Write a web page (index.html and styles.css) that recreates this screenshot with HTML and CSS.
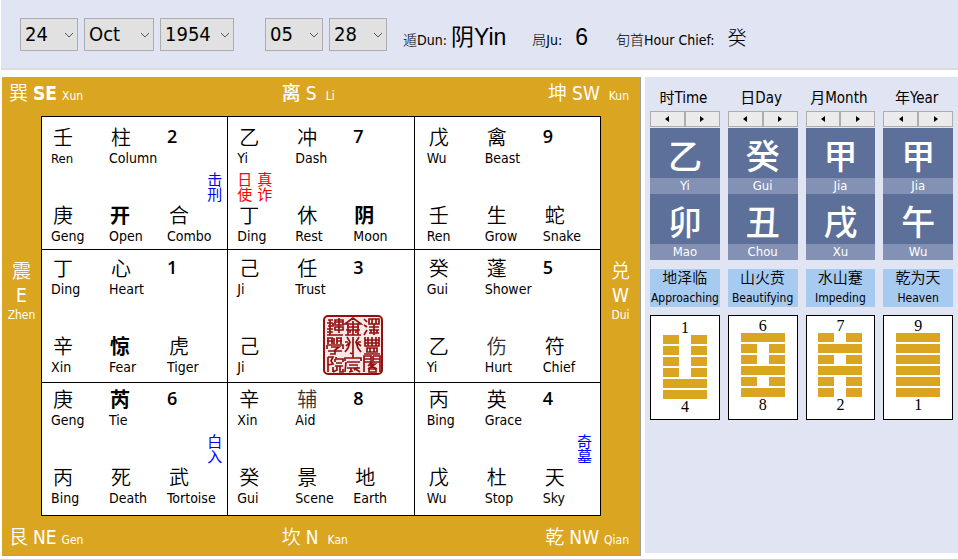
FILE: index.html
```html
<!DOCTYPE html>
<html lang="en">
<head>
<meta charset="utf-8">
<title>Qi Men Chart</title>
<link rel="stylesheet" href="styles.css">
</head>
<body>
<header class="toolbar">
  <div class="fields">
    <span class="field w-day"><select aria-label="Day"><option>24</option></select><svg viewBox="0 0 10 6"><path d="M1 1l4 4 4-4"/></svg></span>
    <span class="field w-month"><select aria-label="Month"><option>Oct</option></select><svg viewBox="0 0 10 6"><path d="M1 1l4 4 4-4"/></svg></span>
    <span class="field w-year"><select aria-label="Year"><option>1954</option></select><svg viewBox="0 0 10 6"><path d="M1 1l4 4 4-4"/></svg></span>
  </div>
  <div class="fields time">
    <span class="field w-day"><select aria-label="Hour"><option>05</option></select><svg viewBox="0 0 10 6"><path d="M1 1l4 4 4-4"/></svg></span>
    <span class="field w-day"><select aria-label="Minute"><option>28</option></select><svg viewBox="0 0 10 6"><path d="M1 1l4 4 4-4"/></svg></span>
  </div>
  <dl class="facts">
    <div><dt>遁Dun:</dt><dd class="big">阴Yin</dd></div>
    <div class="ju"><dt>局Ju:</dt><dd class="big">6</dd></div>
    <div class="chief"><dt>旬首Hour Chief:</dt><dd class="stem">癸</dd></div>
  </dl>
</header>

<main class="workspace">
  <section class="board">
    <div class="edge top">
      <div><span class="zh">巽</span><b class="strong">SE</b><small>Xun</small></div>
      <div><span class="zh heavy">离</span><b>S</b><small class="far">Li</small></div>
      <div><span class="zh">坤</span><b>SW</b><small class="far">Kun</small></div>
    </div>
    <div class="side"><span class="zh">震</span><b>E</b><small>Zhen</small></div>
    <div class="palaces">
      <article class="palace">
        <div class="line"><p><i>壬</i><span class="minor">Ren</span></p><p><i>柱</i>Column</p><strong>2</strong></div>
        <div class="tags end"><span class="blue">击刑</span></div>
        <div class="line"><p><i>庚</i>Geng</p><p><i class="key">开</i>Open</p><p><i>合</i>Combo</p></div>
      </article>
      <article class="palace">
        <div class="line"><p><i>乙</i>Yi</p><p><i>冲</i>Dash</p><strong>7</strong></div>
        <div class="tags"><span>日使</span><span>真诈</span></div>
        <div class="line"><p><i>丁</i>Ding</p><p><i>休</i>Rest</p><p><i class="key">阴</i>Moon</p></div>
      </article>
      <article class="palace">
        <div class="line"><p><i>戊</i>Wu</p><p><i>禽</i>Beast</p><strong>9</strong></div>
        <div class="tags"></div>
        <div class="line"><p><i>壬</i>Ren</p><p><i>生</i>Grow</p><p><i>蛇</i>Snake</p></div>
      </article>
      <article class="palace mid">
        <div class="line"><p><i>丁</i>Ding</p><p><i>心</i>Heart</p><strong>1</strong></div>
        <div class="tags"></div>
        <div class="line"><p><i>辛</i>Xin</p><p><i class="key">惊</i>Fear</p><p><i>虎</i>Tiger</p></div>
      </article>
      <article class="palace mid">
        <div class="line"><p><i>己</i>Ji</p><p><i>任</i>Trust</p><strong>3</strong></div>
        <div class="tags"></div>
        <div class="line"><p><i>己</i>Ji</p></div>
        <svg class="seal" viewBox="0 0 60 60" role="img" aria-label="Seal">
          <rect x="1" y="1" width="58" height="58" rx="4"/>
          <g class="cut">
            <path d="M5 5H10M4 8H10M5 11H10V8M7 5V20M4 14H10M4 17H10M4 20H20M12 5H20V10H12ZM12 7H20M16 3V18M12 12H20V15H12Z"/>
            <path d="M30 3L22 9H38ZM24 12H36M23 15H37M25 9V20M35 9V20M30 6V20M22 20H38M27 15V18M33 15V18"/>
            <path d="M41 4L44 7M41 10L44 12M41 20L44 15M46 4H56V9H46ZM49 4V9M53 4V9M46 12H56M51 9V20M46 15H56M46 18H56M48 15V18M54 15V18"/>
            <path d="M5 23V29M9 23V29M4 23H10M4 26H10M14 23V29M18 23V29M13 23H19M13 26H19M11 23V29M4 30H20V34M4 30V34M8 32H16L12 35V39H7M5 36H19"/>
            <path d="M30 22V39L27 38M24 22L27 27L23 31M27 27L25 33L22 37M36 22L33 27L38 31M33 27L35 33L38 37M22 27H25M35 27H38"/>
            <path d="M42 22V31H56V22M45 22V31M49 22V31M53 22V31M42 25H56M42 28H56M44 33H54V37H44ZM41 39H57M47 33V37M51 33V37"/>
            <path d="M5 42V57M5 42H10L8 46L10 49L5 50M13 42V44H20V47M12 44V47M13 48H19M12 51H20M14 51V55L10 57M17 51V57H20V54M10 52V57"/>
            <path d="M30 40V43M22 46V43H38V46M23 47L22 57M24 47H37M26 50H35M24 53H37M28 53V57M26 57L30 56M31 53L37 57M35 52L31 55"/>
            <path d="M41 57V41H48V47H41M41 44H48M50 41H57V57M50 41V47H57M50 44H57M49 47L45 51M46 49H52L45 54M47 50L54 54M46 54H53V57H46Z"/>
          </g>
        </svg>
      </article>
      <article class="palace mid">
        <div class="line"><p><i>癸</i>Gui</p><p><i>蓬</i>Shower</p><strong>5</strong></div>
        <div class="tags"></div>
        <div class="line"><p><i>乙</i>Yi</p><p><i class="soft">伤</i>Hurt</p><p><i>符</i>Chief</p></div>
      </article>
      <article class="palace low">
        <div class="line"><p><i>庚</i>Geng</p><p><i class="key">芮</i>Tie</p><strong>6</strong></div>
        <div class="tags end"><span class="blue">白入</span></div>
        <div class="line"><p><i>丙</i>Bing</p><p><i>死</i>Death</p><p><i>武</i>Tortoise</p></div>
      </article>
      <article class="palace low">
        <div class="line"><p><i>辛</i>Xin</p><p><i class="soft">辅</i>Aid</p><strong>8</strong></div>
        <div class="tags"></div>
        <div class="line"><p><i>癸</i>Gui</p><p><i>景</i>Scene</p><p><i>地</i>Earth</p></div>
      </article>
      <article class="palace low">
        <div class="line"><p><i>丙</i>Bing</p><p><i>英</i>Grace</p><strong>4</strong></div>
        <div class="tags end wide"><span class="blue">奇墓</span></div>
        <div class="line"><p><i>戊</i>Wu</p><p><i>杜</i>Stop</p><p><i>天</i>Sky</p></div>
      </article>
    </div>
    <div class="side"><span class="zh">兑</span><b>W</b><small>Dui</small></div>
    <div class="edge bottom">
      <div><span class="zh">艮</span><b>NE</b><small>Gen</small></div>
      <div><span class="zh">坎</span><b>N</b><small class="far">Kan</small></div>
      <div><span class="zh">乾</span><b>NW</b><small>Qian</small></div>
    </div>
  </section>

  <aside class="pillars">
    <section class="pillar">
      <h2>时Time</h2>
      <div class="stepper"><button aria-label="Previous hour"><svg viewBox="0 0 4 6"><path d="M4 0v6L0 3z"/></svg></button><button aria-label="Next hour"><svg viewBox="0 0 4 6"><path d="M0 0v6l4-3z"/></svg></button></div>
      <div class="sign">乙</div><div class="reading">Yi</div>
      <div class="sign">卯</div><div class="reading">Mao</div>
      <div class="gua"><span>地泽临</span><span class="en">Approaching</span></div>
      <div class="hex lower"><span>1</span><div class="bars"><u class="gap"></u><u class="gap"></u><u class="gap"></u><u class="gap"></u><u></u><u></u></div><span>4</span></div>
    </section>
    <section class="pillar">
      <h2>日Day</h2>
      <div class="stepper"><button aria-label="Previous day"><svg viewBox="0 0 4 6"><path d="M4 0v6L0 3z"/></svg></button><button aria-label="Next day"><svg viewBox="0 0 4 6"><path d="M0 0v6l4-3z"/></svg></button></div>
      <div class="sign">癸</div><div class="reading">Gui</div>
      <div class="sign">丑</div><div class="reading">Chou</div>
      <div class="gua"><span>山火贲</span><span class="en">Beautifying</span></div>
      <div class="hex"><span>6</span><div class="bars"><u></u><u class="gap"></u><u class="gap"></u><u></u><u class="gap"></u><u></u></div><span>8</span></div>
    </section>
    <section class="pillar">
      <h2>月Month</h2>
      <div class="stepper"><button aria-label="Previous month"><svg viewBox="0 0 4 6"><path d="M4 0v6L0 3z"/></svg></button><button aria-label="Next month"><svg viewBox="0 0 4 6"><path d="M0 0v6l4-3z"/></svg></button></div>
      <div class="sign">甲</div><div class="reading">Jia</div>
      <div class="sign">戌</div><div class="reading">Xu</div>
      <div class="gua"><span>水山蹇</span><span class="en">Impeding</span></div>
      <div class="hex"><span>7</span><div class="bars"><u class="gap"></u><u></u><u class="gap"></u><u></u><u class="gap"></u><u class="gap"></u></div><span>2</span></div>
    </section>
    <section class="pillar">
      <h2>年Year</h2>
      <div class="stepper"><button aria-label="Previous year"><svg viewBox="0 0 4 6"><path d="M4 0v6L0 3z"/></svg></button><button aria-label="Next year"><svg viewBox="0 0 4 6"><path d="M0 0v6l4-3z"/></svg></button></div>
      <div class="sign">甲</div><div class="reading">Jia</div>
      <div class="sign">午</div><div class="reading">Wu</div>
      <div class="gua"><span>乾为天</span><span class="en">Heaven</span></div>
      <div class="hex"><span>9</span><div class="bars"><u></u><u></u><u></u><u></u><u></u><u></u></div><span>1</span></div>
    </section>
  </aside>
</main>
</body>
</html>
```
FILE: styles.css
```css
* { box-sizing: border-box; }
body {
  margin: 0;
  background: #fff;
  color: #000;
  font: 14px/20px "DejaVu Sans Condensed", "Noto Sans CJK SC", sans-serif;
}
p, h2, dl, dd { margin: 0; }

/* Toolbar */
.toolbar {
  display: flex;
  align-items: center;
  height: 70px;
  margin-left: 1px;
  padding: 0 19px;
  background: #e1e4f2;
  border-bottom: 2px solid #dcdcdc;
}
.fields { display: flex; gap: 6px; }
.fields.time { margin-left: 31px; }
.field { position: relative; }
.field select {
  appearance: none;
  display: block;
  width: 100%;
  height: 33px;
  padding: 0 0 0 4px;
  border: 1px solid #adadad;
  border-radius: 0;
  background: #e1e1e1;
  color: #000;
  font: 20px/30px "DejaVu Sans Condensed", sans-serif;
}
.field svg {
  position: absolute;
  right: 4px;
  top: 14px;
  width: 10px;
  height: 6px;
  fill: none;
  stroke: #555;
  pointer-events: none;
}
.w-day { width: 58px; }
.w-month { width: 70px; }
.w-year { width: 74px; }

.facts { display: flex; align-items: baseline; margin-left: 16px; padding-top: 5px; }
.facts div { display: flex; align-items: baseline; gap: 4px; }
.facts .ju { gap: 13px; margin-left: 26px; }
.facts .chief { gap: 13px; margin-left: 28px; }
.facts dt { font-weight: 300; }
.big { font: 23px/30px "Liberation Sans", "Noto Sans CJK SC", sans-serif; }
.stem { font-size: 19px; font-weight: 300; }

/* Board */
.workspace {
  display: grid;
  grid-template-columns: minmax(0, 639fr) minmax(0, 313fr);
  align-items: start;
  gap: 4px;
  margin: 7px 0 0 2px;
}
.board {
  display: grid;
  grid-template-columns: 39px 1fr 39px;
  background: #daa520;
  color: #fff;
  border-right: 1px solid #a0a0a0;
  border-bottom: 1px solid #a0a0a0;
}
.edge {
  grid-column: 1 / -1;
  display: grid;
  grid-template-columns: 44% 1fr auto;
  padding: 0 11px 0 7px;
  height: 39px;
}
.edge div { display: flex; align-items: baseline; gap: 5px; }
.edge.top { padding-top: 1px; }
.edge.bottom { padding-top: 6px; }
.board b { font-size: 19px; line-height: 30px; font-weight: 400; }
.board b.strong { font-weight: 700; }
.board small { font-size: 12px; line-height: 16px; }
.board small.far { margin-left: 4px; }
.zh { font-size: 19px; line-height: 24px; font-weight: 350; }
.zh.heavy { font-weight: 500; }
.side {
  display: flex;
  flex-direction: column;
  align-items: center;
  padding-top: 143px;
}
.side b { line-height: 24px; }

.palaces {
  display: grid;
  grid-template-columns: repeat(3, minmax(0, 1fr));
  grid-auto-rows: 132px;
  gap: 1px;
  padding: 1px;
  background: #000;
  color: #000;
}
.palace { position: relative; padding-top: 9px; background: #fff; }
.palace.mid { padding-top: 7px; }
.palace.low { padding-top: 5px; }
.line {
  display: grid;
  grid-template-columns: repeat(3, 58px);
  height: 42px;
  padding-left: 9px;
}
.palace:nth-child(3n) .line { padding-left: 12px; }
.line i {
  display: block;
  padding-left: 2px;
  font: 350 20px/22px "Noto Sans CJK SC", sans-serif;
}
.line i.key { padding-left: 1px; font-weight: 700; }
.line i.soft { color: #333; }
.line strong { font: 600 18px/20px "Open Sans", sans-serif; }
.minor { font-size: 13px; }
.tags {
  display: flex;
  align-items: flex-end;
  gap: 2px;
  height: 36px;
  padding: 0 4px 2px 7px;
  color: #f00;
  font: 15px/18px "Noto Sans CJK SC", sans-serif;
}
.tags span { writing-mode: vertical-rl; }
.tags.end { justify-content: flex-end; }
.tags.wide { padding-right: 7px; }
.tags .blue { color: #00f; }
.seal {
  position: absolute;
  right: 31px;
  bottom: 7px;
  width: 60px;
  height: 60px;
}
.seal rect { fill: #f7e9e7; stroke: #941010; stroke-width: 2; }
.cut { fill: none; stroke: #941010; stroke-width: 1.7; }

/* Four pillars */
.pillars {
  display: grid;
  grid-template-columns: repeat(4, minmax(0, 1fr));
  gap: 8px;
  min-height: 476px;
  padding: 10px 5px 0;
  background: #e1e4f2;
}
.pillar { text-align: center; }
.pillar h2 { padding-right: 3px; font-size: 15px; line-height: 22px; font-weight: 400; }
.stepper { display: grid; grid-template-columns: 1fr 1fr; height: 17px; margin-top: 2px; padding-bottom: 1px; }
.stepper button {
  display: flex;
  align-items: center;
  justify-content: center;
  padding: 0;
  border: 1px solid #adadad;
  background: #ebebeb;
}
.stepper svg { width: 4px; height: 6px; }
.sign {
  height: 50px;
  background: #5d709a;
  color: #fff;
  font: 500 34px/54px "Noto Sans CJK SC", sans-serif;
}
.reading { background: #8291b4; color: #fff; font-size: 13px; line-height: 16px; }
.gua {
  display: flex;
  flex-direction: column;
  align-items: center;
  height: 38px;
  margin: 9px 0 8px;
  background: #a6caf0;
  font: 350 15px/16px "Noto Sans CJK SC", sans-serif;
}
.gua .en { font: 12px/26px "DejaVu Sans Condensed", sans-serif; }
.hex {
  display: flex;
  flex-direction: column;
  align-items: center;
  height: 105px;
  padding-top: 2px;
  border: 1px solid #000;
  background: #fff;
  font: 16px/15px "Liberation Serif", serif;
}
.hex.lower { padding-top: 4px; }
.bars { display: grid; gap: 2px; width: 44px; }
.bars u { height: 9px; background: #daa520; }
.bars .gap { background: linear-gradient(90deg, #daa520 16px, #fff 16px 28px, #daa520 28px); }
```
